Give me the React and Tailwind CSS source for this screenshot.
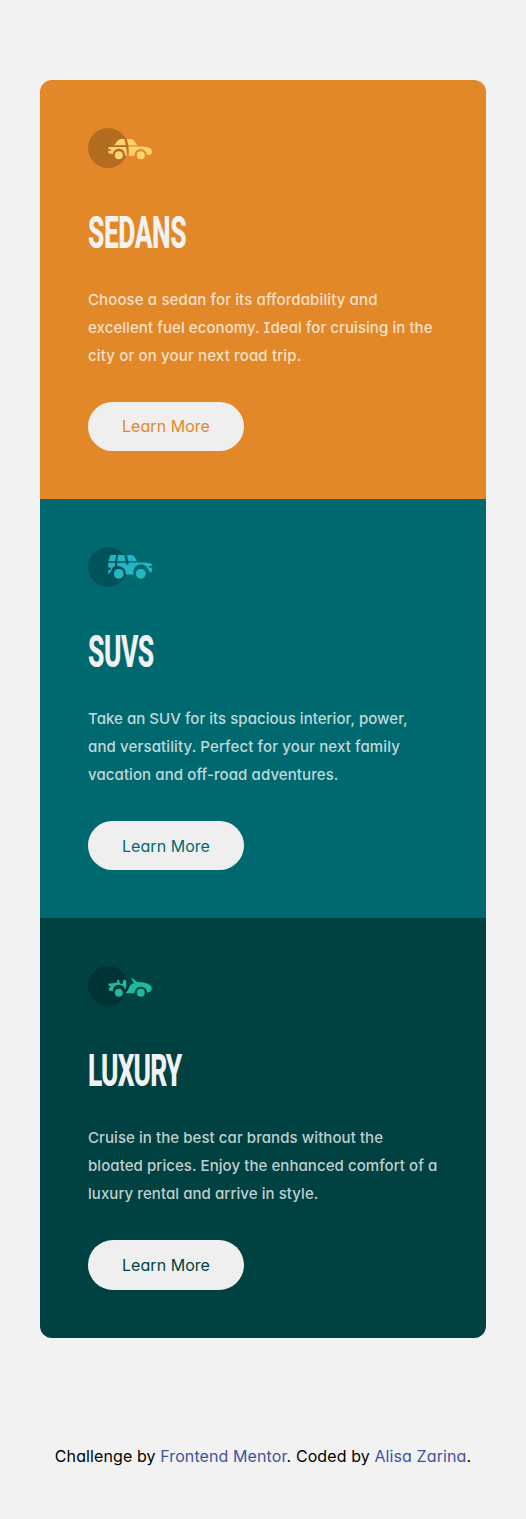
import React from "react";

const SedanIcon = () => (
  <svg width="64" height="40" viewBox="0 0 64 40" className="block">
    <circle cx="20" cy="20" r="20" fill="#000" fillOpacity=".2" />
    <g fill="#FFD36F">
      <path d="M26.2 17.3 29.4 12.9Q31 11 33 11H36.4L37.8 17.3Z" />
      <path d="M39 11H42.5Q44.6 11 45.8 12.6L49.2 17.3H40.5Z" />
      <path d="M21 18.9H38.2Q39 22 38.6 27.7H37A6.2 6.2 0 0 0 24.7 26L20.7 25.3Q19.8 23.8 20.2 22.9H22.8V21.3H20.2Q20 20 21 18.9Z" />
      <path d="M40.7 18.6H54Q59 18.6 63 20.6Q64.2 22.2 63.9 24.2Q63.6 26.2 62 26.8H59A6.3 6.3 0 0 0 46.4 27.7H40.8Q41.4 23 40.7 18.6Z" />
      <circle cx="30.8" cy="27.3" r="4" />
      <circle cx="52.8" cy="27.3" r="4" />
    </g>
  </svg>
);

const SuvIcon = () => (
  <svg width="64" height="40" viewBox="0 0 64 40" className="block">
    <circle cx="20" cy="20" r="20" fill="#000" fillOpacity=".2" />
    <g fill="#26B5C5">
      <path d="M22.4 8H28.2L27 14.2H20.3Z" />
      <path d="M30.1 8H36.3L37.8 14.2H29Z" />
      <path d="M39 8H43.5Q45.4 8 46.4 9.5L49 14.2H40.4Z" />
      <path d="M20.2 15.8H27.2V18.6A8 8 0 0 0 23.3 24L20.2 27.2V23H22.7V20.5H20.2Z" />
      <path d="M29.2 15.8H38.2V17.4H40.6V15.5H56Q61 15.6 63.8 17V18.9H61V20.6H63.9V24.7L62.2 25.8A9 9 0 0 0 60 22.2A7.2 7.2 0 0 0 45.8 27.5H37.8A7.2 7.2 0 0 0 31 19.2L29.2 18.5Z" />
      <circle cx="30.8" cy="26.8" r="4.9" />
      <circle cx="52.8" cy="26.8" r="4.9" />
    </g>
  </svg>
);

const LuxuryIcon = () => (
  <svg width="64" height="40" viewBox="0 0 64 40" className="block">
    <circle cx="20" cy="20" r="20" fill="#000" fillOpacity=".2" />
    <g fill="#1DBA9C">
      <path d="M20.2 17.4Q25 17.6 29.3 16.2L29 14.4Q29.5 13.3 31 14L32.2 17.7H34.5L35.4 14Q37 13.2 38.2 14.4L38.5 19.4L37.2 24.6A6.2 6.2 0 0 0 24.8 25.3L21.3 24.4L20.5 22.6L23.5 20.2H21.1Z" />
      <path d="M43.2 12.2Q44 11.7 44.8 12.4L49 16Q58 15.7 63.3 20.2Q64.4 23.2 62.5 25.5L59.2 26.8A6.3 6.3 0 0 0 46.5 27.2H37.7Q40.8 23.4 42.4 19L46 17.1Z" />
      <circle cx="30.8" cy="26.8" r="4" />
      <circle cx="52.8" cy="26.8" r="4" />
    </g>
  </svg>
);

const cards = [
  {
    title: "SEDANS",
    Icon: SedanIcon,
    bg: "bg-[#e28828]",
    ink: "text-[#e28828]",
    squeeze: "tracking-[-0.8px]",
    lines: [
      ["Choose a sedan for its affordability and", "tracking-[0.12px]"],
      ["excellent fuel economy. Ideal for cruising in the", "tracking-[0.07px]"],
      ["city or on your next road trip.", "tracking-[0.15px]"],
    ],
  },
  {
    title: "SUVS",
    Icon: SuvIcon,
    bg: "bg-[#006970]",
    ink: "text-[#006970]",
    squeeze: "tracking-[-0.8px]",
    lines: [
      ["Take an SUV for its spacious interior, power,", "tracking-[0.04px]"],
      ["and versatility. Perfect for your next family", "tracking-[0.13px]"],
      ["vacation and off-road adventures.", "tracking-[0.09px]"],
    ],
  },
  {
    title: "LUXURY",
    Icon: LuxuryIcon,
    bg: "bg-[#004241]",
    ink: "text-[#004241]",
    squeeze: "tracking-[-1.5px]",
    lines: [
      ["Cruise in the best car brands without the", "tracking-[0.07px]"],
      ["bloated prices. Enjoy the enhanced comfort of a", "tracking-[0.07px]"],
      ["luxury rental and arrive in style.", "tracking-[0.07px]"],
    ],
  },
];

function Card({ title, Icon, bg, ink, squeeze, lines }) {
  return (
    <section className={`flex h-[419.2px] flex-col items-start p-12 ${bg}`}>
      <Icon />
      <h2
        className={`mt-[38px] h-[80px] origin-left scale-x-[0.587] whitespace-nowrap font-['Roboto',sans-serif] text-[45px] leading-[54px] font-extrabold text-[#f2f2f2] ${squeeze}`}
      >
        {title}
      </h2>
      <p className="text-[15px] leading-7 font-medium text-white/75">
        {lines.map(([text, tracking]) => (
          <span key={text} className={`block whitespace-nowrap ${tracking}`}>
            {text}{" "}
          </span>
        ))}
      </p>
      <button className={`mt-8 h-[49.2px] w-[156px] rounded-[25px] bg-[#efefef] pb-[0.4px] text-base tracking-[0.04px] ${ink}`}>
        Learn More
      </button>
    </section>
  );
}

export default function App() {
  return (
    <div className="min-h-[1519px] bg-[#f2f2f2] px-10 pt-20 font-['Inter',sans-serif] [font-feature-settings:'cv11','cv08']">
      <main className="overflow-hidden rounded-xl">
        {cards.map((card) => (
          <Card key={card.title} {...card} />
        ))}
      </main>
      <footer className="mt-[106.4px] text-center text-base leading-6 tracking-[0.1px] whitespace-nowrap text-black">
        Challenge by <a className="text-[#3e52a3]">Frontend Mentor</a>. Coded by{" "}
        <a className="text-[#3e52a3]">Alisa Zarina</a>.
      </footer>
    </div>
  );
}
